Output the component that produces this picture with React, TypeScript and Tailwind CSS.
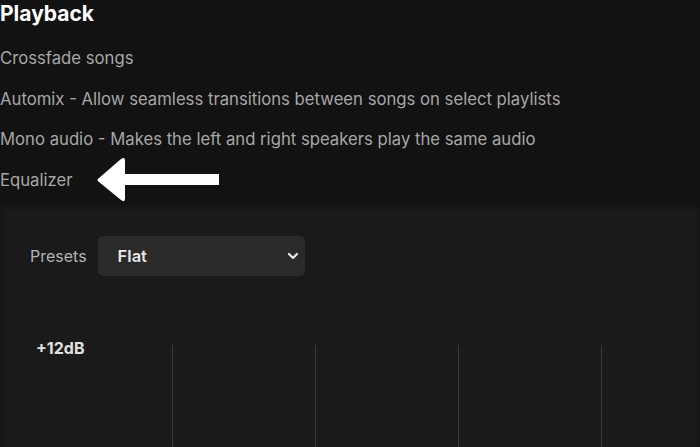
import { ChevronDown } from "lucide-react";

const options = [
  "Crossfade songs",
  "Automix - Allow seamless transitions between songs on select playlists",
  "Mono audio - Makes the left and right speakers play the same audio",
];

const Arrow = () => (
  <svg width="128" height="46" viewBox="0 0 128 46" className="ml-[22px] shrink-0">
    <path
      d="M4 21 L26 2 Q30 -1 30 4 L30 17 L124 17 L124 28 L30 28 L30 41 Q30 46 26 43 L4 25 Q1 23 4 21 Z"
      fill="#ffffff"
    />
  </svg>
);

export default function App() {
  return (
    <div className="w-[700px] h-[447px] overflow-hidden bg-[#121212] font-['Inter',sans-serif]">
      <div className="h-[204px]">
        <h2 className="text-[21px] font-bold text-white leading-[28px]">Playback</h2>
        <div className="mt-[19px] flex flex-col gap-[18.7px]">
          {options.map((o) => (
            <div key={o} className="text-[16.7px] text-[#a7a7a7] leading-[22px]">
              {o}
            </div>
          ))}
          <div className="flex items-center h-[22px]">
            <span className="text-[16.7px] text-[#a7a7a7] leading-[22px]">Equalizer</span>
            <Arrow />
          </div>
        </div>
      </div>
      <div className="h-[243px] bg-[#1a1a1a] shadow-[inset_0_3px_4px_rgba(0,0,0,0.35)] pl-[30px] pt-[32px]">
        <div className="flex items-center gap-[11px]">
          <span className="text-[16px] text-[#b3b3b3]">Presets</span>
          <div className="w-[207px] h-[40px] rounded-[5px] bg-[#2a2a2a] flex items-center justify-between pl-[20px] pr-[4px]">
            <span className="text-[16.5px] font-semibold text-[#e6e6e6]">Flat</span>
            <ChevronDown size={16} strokeWidth={3.5} color="#e6e6e6" />
          </div>
        </div>
        <div className="mt-[69px] flex">
          <div className="w-[142px] shrink-0 pl-[6px] text-[16px] font-bold text-[#e0e0e0] leading-[20px] -mt-[7px]">+12dB</div>
          {[0, 1, 2, 3].map((i) => (
            <div key={i} className="w-[143px] shrink-0 h-[110px] border-l-[1.5px] border-[#3a3a3a]" />
          ))}
        </div>
      </div>
    </div>
  );
}
